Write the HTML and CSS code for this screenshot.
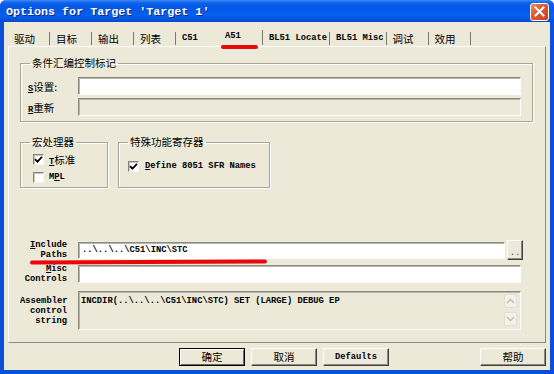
FILE: index.html
```html
<!DOCTYPE html>
<html>
<head>
<meta charset="utf-8">
<link rel="stylesheet" href="styles.css">
</head>
<body>
<div class="window">
  <div class="titlebar">
    <span class="title">Options for Target 'Target 1'</span>
    <div class="close"><svg width="11" height="11" viewBox="0 0 11 11"><path d="M1.5 1.5 L9.5 9.5 M9.5 1.5 L1.5 9.5" stroke="#fff" stroke-width="2" stroke-linecap="square"/></svg></div>
  </div>
  <div class="client">
    <div class="tabs">
      <div class="tab">驱动</div>
      <div class="tab">目标</div>
      <div class="tab">输出</div>
      <div class="tab">列表</div>
      <div class="tab m nosep">C51</div>
      <div class="tab m sel">A51</div>
      <div class="tab m">BL51 Locate</div>
      <div class="tab m">BL51 Misc</div>
      <div class="tab">调试</div>
      <div class="tab">效用</div>
    </div>
    <div class="panel">
      <fieldset class="group g-cond">
        <legend>条件汇编控制标记</legend>
        <div class="rows">
          <div class="frow"><span class="flabel"><u class="m">S</u>设置:</span><div class="input"></div></div>
          <div class="frow"><span class="flabel"><u class="m">R</u>重新</span><div class="input disabled"></div></div>
        </div>
      </fieldset>
      <div class="groups">
        <fieldset class="group g-macro">
          <legend>宏处理器</legend>
          <div class="chk"><span class="box"><svg width="9" height="9" viewBox="0 0 9 9"><path d="M1 4.2 L3.4 6.6 L8 1.8" stroke="#000" stroke-width="1.8" fill="none"/></svg></span><span><u class="m">T</u>标准</span></div>
          <div class="chk"><span class="box"></span><span class="m">M<u>P</u>L</span></div>
        </fieldset>
        <fieldset class="group g-sfr">
          <legend>特殊功能寄存器</legend>
          <div class="chk"><span class="box"><svg width="9" height="9" viewBox="0 0 9 9"><path d="M1 4.2 L3.4 6.6 L8 1.8" stroke="#000" stroke-width="1.8" fill="none"/></svg></span><span class="m sfr"><u>D</u>efine 8051 SFR Names</span></div>
        </fieldset>
      </div>
      <div class="spacer"></div>
      <div class="fields">
        <div class="field f-inc">
          <div class="lbl m"><u>I</u>nclude<br>Paths</div>
          <div class="input"><span class="m val">..\..\..\C51\INC\STC</span></div>
          <div class="dots m">..</div>
        </div>
        <div class="field f-misc">
          <div class="lbl m"><u>M</u>isc<br>Controls</div>
          <div class="input"></div>
        </div>
        <div class="field f-asm">
          <div class="lbl m">Assembler<br>control<br>string</div>
          <div class="textarea">
            <div class="ta-text m">INCDIR(..\..\..\C51\INC\STC) SET (LARGE) DEBUG EP</div>
            <div class="scroll">
              <div class="arrow"><svg width="9" height="6" viewBox="0 0 9 6"><path d="M1 5 L4.5 1.5 L8 5" stroke="#c4c4bc" stroke-width="1.6" fill="none"/></svg></div>
              <div class="arrow"><svg width="9" height="6" viewBox="0 0 9 6"><path d="M1 1 L4.5 4.5 L8 1" stroke="#c4c4bc" stroke-width="1.6" fill="none"/></svg></div>
            </div>
          </div>
        </div>
      </div>
    </div>
    <div class="buttons">
      <div class="btn default">确定</div>
      <div class="btn">取消</div>
      <div class="btn m">Defaults</div>
      <div class="btn help">帮助</div>
    </div>
  </div>
  <div class="mark mark-tab"></div>
  <div class="mark mark-inc"></div>
</div>
</body>
</html>
```
FILE: styles.css
```css
html, body {
  margin: 0;
  padding: 0;
  background: #ffffff;
  overflow: hidden;
}
.window {
  position: relative;
  width: 554px;
  height: 374px;
  box-sizing: border-box;
  background: #0A4FDA;
  border-radius: 6px 6px 0 0;
  display: flex;
  flex-direction: column;
  font-family: "Noto Sans CJK SC", "Liberation Sans", sans-serif;
  font-size: 10.5px;
  color: #000;
}
.m {
  font-family: "Liberation Mono", "Noto Sans CJK SC", monospace;
  font-size: 8.8px;
  font-weight: bold;
}
.titlebar {
  height: 22px;
  flex: none;
  display: flex;
  align-items: center;
  padding: 0 5px 0 6px;
  border-radius: 6px 6px 0 0;
  background: linear-gradient(#3D8DF5 0px, #0C5FEA 3px, #0458E8 9px, #0860EC 16px, #0449D0 22px);
}
.title {
  flex: 1;
  color: #fff;
  font-family: "Liberation Mono", monospace;
  font-weight: bold;
  font-size: 11.7px;
  text-shadow: 1px 1px 0 #0A2A8A;
  padding-top: 1px;
}
.close {
  width: 17px;
  height: 16px;
  border: 1px solid #fff;
  border-radius: 3px;
  background: linear-gradient(135deg, #F08C6C 0%, #E25A35 40%, #C8401C 100%);
  display: flex;
  align-items: center;
  justify-content: center;
  margin-top: 1px;
}
.client {
  flex: 1;
  margin: 0 4px 4px;
  background: #ECE9D8;
  display: flex;
  flex-direction: column;
  padding: 4px 4px 4px;
}
.tabs {
  height: 20px;
  display: flex;
  align-items: flex-end;
  flex: none;
}
.tab {
  height: 13px;
  line-height: 13px;
  min-width: 42px;
  box-sizing: border-box;
  padding: 0 2px 0 6px;
  margin-bottom: 1px;
  border-right: 1px solid #7A7A72;
  white-space: nowrap;
}
.tab.nosep {
  border-right-color: transparent;
}
.tab.sel {
  min-width: 45px;
  padding-left: 7px;
  height: 15px;
  padding-bottom: 2px;
}
.panel {
  height: 297px;
  flex: none;
  box-sizing: border-box;
  border: 1px solid;
  border-color: #FCFCFA #8C8C84 #8C8C84 #FCFCFA;
  padding: 9px 12px 12px 11px;
  display: flex;
  flex-direction: column;
}
.group {
  margin: 0;
  border: 1px solid #A6A69C;
  box-shadow: 1px 1px 0 #fff, inset 1px 1px 0 #fff;
  min-width: 0;
}
.group legend {
  padding: 0 2px;
  line-height: 14px;
  height: 14px;
}
.g-cond {
  padding: 7px 11px 5px 7px;
}
.g-cond legend {
  margin-left: 2px;
}
.rows {
  display: flex;
  flex-direction: column;
  gap: 3px;
}
.frow {
  display: flex;
  align-items: center;
  height: 18px;
}
.flabel {
  width: 50px;
  flex: none;
}
.input {
  flex: 1;
  height: 18px;
  box-sizing: border-box;
  background: #fff;
  border: 1px solid;
  border-color: #8A8A80 #FFFFFF #FFFFFF #8A8A80;
  box-shadow: inset 1px 1px 0 #B8B6A8;
  display: flex;
  align-items: center;
  padding-left: 2px;
}
.input.disabled {
  background: #ECE9D8;
}
.groups {
  display: flex;
  gap: 10px;
  margin-top: 13px;
}
.g-macro {
  width: 88px;
  box-sizing: border-box;
  padding: 1px 4px 1px 12px;
}
.g-macro legend {
  margin-left: -3px;
}
.g-sfr {
  width: 152px;
  box-sizing: border-box;
  padding: 8px 4px 10px 9px;
}
.chk {
  display: flex;
  align-items: center;
  gap: 5px;
  height: 18px;
  white-space: nowrap;
}
.sfr {
  margin-left: 1px;
}
.box {
  width: 11px;
  height: 11px;
  box-sizing: border-box;
  background: #fff;
  border: 1px solid;
  border-color: #85857C #F4F4F0 #F4F4F0 #85857C;
  box-shadow: inset 1px 1px 0 #C8C6B8;
  display: flex;
  align-items: center;
  justify-content: center;
}
.spacer {
  flex: 1;
}
.fields {
  display: flex;
  flex-direction: column;
  padding-right: 12px;
}
.field {
  display: flex;
  align-items: center;
  gap: 11px;
}
.lbl {
  width: 47px;
  flex: none;
  text-align: right;
  line-height: 10px;
  white-space: nowrap;
}
.f-inc {
  height: 20px;
  margin-right: -2px;
}
.f-inc .input {
  height: 17px;
  margin-right: -9px;
}
.val {
  padding-left: 1px;
}
.dots {
  width: 16px;
  height: 20px;
  box-sizing: border-box;
  border: 1px solid;
  border-color: #FFFFFF #404040 #404040 #FFFFFF;
  box-shadow: inset -1px -1px 0 #8A8A80;
  background: #ECE9D8;
  display: flex;
  align-items: flex-end;
  justify-content: center;
  line-height: 12px;
  font-weight: normal;
  color: #555;
}
.f-misc {
  height: 20px;
  margin-top: 4px;
}
.f-asm {
  margin-top: 7px;
}
.textarea {
  flex: 1;
  height: 39px;
  box-sizing: border-box;
  background: #ECE9D8;
  border: 1px solid;
  border-color: #8A8A80 #FFFFFF #FFFFFF #8A8A80;
  box-shadow: inset 1px 1px 0 #B8B6A8;
  display: flex;
}
.ta-text {
  flex: 1;
  padding: 4px 0 0 2px;
  line-height: 10px;
  white-space: nowrap;
}
.scroll {
  width: 15px;
  display: flex;
  flex-direction: column;
  justify-content: space-between;
  padding: 2px 1px 3px 0;
}
.arrow {
  width: 13px;
  height: 14px;
  box-sizing: border-box;
  border: 1px solid #E2E0D6;
  background: #F2F1EA;
  border-radius: 2px;
  display: flex;
  align-items: center;
  justify-content: center;
}
.buttons {
  height: 18px;
  margin-top: 5px;
  flex: none;
  display: flex;
  gap: 6px;
  padding-left: 171px;
}
.btn {
  width: 66px;
  height: 18px;
  box-sizing: border-box;
  border: 1px solid;
  border-color: #FFFFFF #404040 #404040 #FFFFFF;
  box-shadow: inset -1px -1px 0 #8A8A80;
  background: #ECE9D8;
  display: flex;
  align-items: center;
  justify-content: center;
  line-height: 14px;
}
.btn.default {
  border: 1px solid #000;
  box-shadow: inset 1px 1px 0 #fff, inset -1px -1px 0 #6A6A62;
}
.btn.help {
  margin-left: auto;
}
.mark {
  position: absolute;
  background: #E80808;
  border-radius: 3px;
}
.mark-tab {
  left: 221px;
  top: 45px;
  width: 37px;
  height: 4px;
}
.mark-inc {
  left: 30px;
  top: 260px;
  width: 237px;
  height: 4px;
  transform: rotate(-0.25deg);
}
```
